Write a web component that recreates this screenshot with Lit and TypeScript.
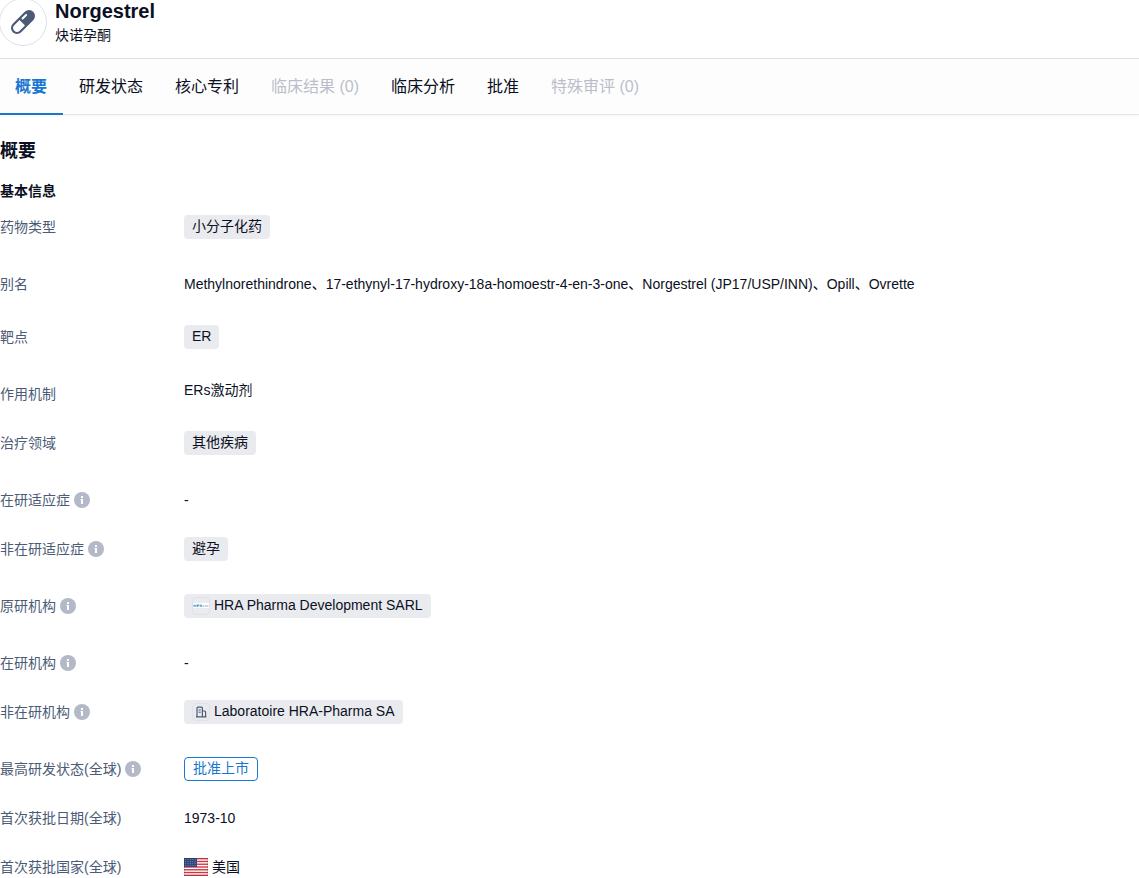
import { LitElement, html, svg, css, nothing, type TemplateResult } from "lit";
import { customElement, property, state } from "lit/decorators.js";
import { classMap } from "lit/directives/class-map.js";

type Kind = "chip" | "text" | "list" | "link" | "status" | "country";

interface Row {
  label: string;
  info?: boolean;
  kind: Kind;
  value: string;
  icon?: "hra" | "building";
}

const TABS = [
  { label: "概要" },
  { label: "研发状态" },
  { label: "核心专利" },
  { label: "临床结果 (0)", disabled: true },
  { label: "临床分析" },
  { label: "批准" },
  { label: "特殊审评 (0)", disabled: true },
];

const ROWS: Row[] = [
  { label: "药物类型", kind: "chip", value: "小分子化药" },
  {
    label: "别名",
    kind: "list",
    value:
      "Methylnorethindrone、17-ethynyl-17-hydroxy-18a-homoestr-4-en-3-one、Norgestrel (JP17/USP/INN)、Opill、Ovrette",
  },
  { label: "靶点", kind: "chip", value: "ER" },
  { label: "作用机制", kind: "link", value: "ERs激动剂" },
  { label: "治疗领域", kind: "chip", value: "其他疾病" },
  { label: "在研适应症", info: true, kind: "text", value: "-" },
  { label: "非在研适应症", info: true, kind: "chip", value: "避孕" },
  { label: "原研机构", info: true, kind: "chip", value: "HRA Pharma Development SARL", icon: "hra" },
  { label: "在研机构", info: true, kind: "text", value: "-" },
  { label: "非在研机构", info: true, kind: "chip", value: "Laboratoire HRA-Pharma SA", icon: "building" },
  { label: "最高研发状态(全球)", info: true, kind: "status", value: "批准上市" },
  { label: "首次获批日期(全球)", kind: "text", value: "1973-10" },
  { label: "首次获批国家(全球)", kind: "country", value: "美国" },
];

const pill = html`
  <svg width="30" height="30" viewBox="0 0 30 30" aria-hidden="true">
    <g transform="rotate(-45 15 15)">
      <rect x="0.5" y="9" width="29" height="12" rx="6" fill="#4b5b76" />
      <path d="M14 11.2H6.5a3.8 3.8 0 0 0 0 7.6H14z" fill="#fff" />
      <path d="M17.2 12.2h5" fill="none" stroke="#fff" stroke-width="2" stroke-linecap="round" />
    </g>
  </svg>
`;

const infoIcon = html`
  <svg width="16" height="16" viewBox="0 0 16 16" aria-hidden="true">
    <circle cx="8" cy="8" r="8" fill="#b3b9c6" />
    <rect x="7" y="4" width="2" height="2" fill="#fff" />
    <path d="M6.5 7H9v5H7V8h-.5z" fill="#fff" />
  </svg>
`;

const hraLogo = html`
  <svg width="16" height="16" viewBox="0 0 16 16" aria-hidden="true">
    <rect y="5" width="16" height="5" fill="#fff" />
    <path d="M1 6.5v2.5M3 6.5v2.5M1 7.8h2M4.5 9V6.8h1.5v1H5M7 9l1-2.4L9 9" fill="none" stroke="#4f9ac9" stroke-width="0.9" />
    <path d="M9.5 8h2M12 8h3.5" fill="none" stroke="#a9cde3" stroke-width="1.4" />
  </svg>
`;

const building = html`
  <svg width="16" height="16" viewBox="0 0 16 16" aria-hidden="true">
    <g fill="none" stroke="#4b5b76" stroke-width="1.2">
      <path d="M4 13V4.2a1 1 0 0 1 1-1h3.4a1 1 0 0 1 1 1V13" />
      <path d="M9.4 7h2.2a1 1 0 0 1 1 1v5M3 12.9h10.4" />
      <path d="M5.6 6h2.2M5.6 8.2h2.2" stroke-width="1" />
    </g>
  </svg>
`;

const flag = html`
  <svg width="24" height="18" viewBox="0 0 24 18" aria-hidden="true">
    <rect width="24" height="18" fill="#fff" />
    ${[0, 1, 2, 3, 4, 5, 6].map(
      (i) => svg`<rect y=${(i * 36) / 13} width="24" height=${18 / 13} fill="#d0383f" />`
    )}
    <rect width="13" height="9" fill="#33487f" />
    ${[0, 1, 2, 3].map((r) =>
      [0, 1, 2, 3, 4].map(
        (c) => svg`<rect x=${1.2 + c * 2.4} y=${1 + r * 2.1} width="0.8" height="0.8" fill="#8e9cc0" />`
      )
    )}
    <rect x="0.5" y="0.5" width="23" height="17" fill="none" stroke="#000" stroke-opacity="0.12" />
  </svg>
`;

@customElement("drug-field")
export class DrugField extends LitElement {
  @property({ attribute: false }) row!: Row;

  static styles = css`
    :host {
      display: grid;
      grid-template-columns: 184px minmax(0, 1fr);
      padding-bottom: 25px;
      font-size: 14px;
      line-height: 24px;
    }
    .label {
      display: flex;
      align-items: center;
      align-self: start;
      gap: 4px;
      color: #4b5b76;
    }
    .info {
      display: flex;
      padding: 0;
      border: 0;
      background: none;
      cursor: help;
    }
    .value {
      margin: 0;
      color: #0b1023;
    }
    .value.chip {
      padding-bottom: 8px;
    }
    .value.list {
      padding-bottom: 4px;
    }
    .value.link {
      line-height: 16px;
    }
    .value.country {
      display: flex;
      align-items: center;
      gap: 4px;
    }
    a {
      color: inherit;
      text-decoration: none;
    }
    .tag,
    .state {
      display: flex;
      align-items: center;
      gap: 4px;
      box-sizing: border-box;
      width: fit-content;
      height: 24px;
      padding: 0 8px 2px;
      border-radius: 4px;
      background: #eaebef;
    }
    .state {
      border: 1px solid #1976d2;
      background: #fff;
      color: #1976d2;
    }
    .logo {
      display: flex;
      box-sizing: border-box;
      width: 18px;
      height: 18px;
      margin-top: 2px;
      border: 1px solid #e0e2e9;
      border-radius: 4px;
      overflow: hidden;
    }
  `;

  private content(): TemplateResult | string {
    const { kind, value, icon } = this.row;
    switch (kind) {
      case "chip":
        return html`<a class="tag" href="#">
          ${icon ? html`<span class="logo">${icon === "hra" ? hraLogo : building}</span>` : nothing}${value}
        </a>`;
      case "link":
        return html`<a href="#">${value}</a>`;
      case "status":
        return html`<span class="state">${value}</span>`;
      case "country":
        return html`${flag}<span>${value}</span>`;
      default:
        return value;
    }
  }

  render() {
    const { label, info, kind } = this.row;
    return html`
      <div class="label">
        <span>${label}</span>
        ${info ? html`<button class="info" type="button" aria-label=${label}>${infoIcon}</button>` : nothing}
      </div>
      <div class="value ${kind}">${this.content()}</div>
    `;
  }
}

@customElement("app-root")
export class AppRoot extends LitElement {
  @state() private active = 0;

  static styles = css`
    :host {
      display: block;
      overflow: hidden;
      background: #fff;
      color: #0b1023;
      font-family: "Liberation Sans", "Noto Sans CJK SC", sans-serif;
    }
    .head {
      display: flex;
      align-items: flex-start;
      gap: 8px;
      height: 58px;
      overflow: hidden;
      border-bottom: 1px solid #dcdee4;
    }
    .avatar {
      display: flex;
      flex: none;
      align-items: center;
      justify-content: center;
      box-sizing: border-box;
      width: 48px;
      height: 48px;
      margin: -2px 0 0 -1px;
      border: 1px solid #dfe1e8;
      border-radius: 50%;
    }
    .name {
      margin: 0;
      font-size: 20px;
      line-height: 22px;
    }
    .alias {
      margin: 0;
      font-size: 14px;
      line-height: 26px;
    }
    .tabs {
      display: flex;
      height: 55px;
      border-bottom: 1px solid #e6e7eb;
      box-shadow: 0 1px 2px rgba(0, 0, 0, 0.04);
      background: #fdfdfd;
    }
    .tab {
      margin-bottom: -1px;
      padding: 2px 16px 0;
      border: 0;
      border-bottom: 2px solid transparent;
      background: none;
      color: #0b1023;
      font: inherit;
      font-size: 16px;
      line-height: 24px;
      white-space: nowrap;
      cursor: pointer;
    }
    .tab:first-child {
      padding-left: 15px;
    }
    .tab.active {
      border-bottom-color: #1976d2;
      color: #1976d2;
      font-weight: 700;
    }
    .tab:disabled {
      color: #b9bfca;
      cursor: default;
    }
    .section {
      margin: 0;
      padding: 22px 0 14px;
      font-size: 18px;
      line-height: 28px;
    }
    .group {
      margin: 0;
      padding-bottom: 12px;
      font-size: 14px;
      line-height: 24px;
    }
  `;

  render() {
    return html`
      <header class="head">
        <div class="avatar">${pill}</div>
        <div>
          <h1 class="name">Norgestrel</h1>
          <p class="alias">炔诺孕酮</p>
        </div>
      </header>
      <nav class="tabs">
        ${TABS.map(
          (t, i) => html`<button
            type="button"
            class=${classMap({ tab: true, active: i === this.active })}
            ?disabled=${t.disabled ?? false}
            @click=${() => (this.active = i)}
          >
            ${t.label}
          </button>`
        )}
      </nav>
      <main>
        <h2 class="section">概要</h2>
        <h3 class="group">基本信息</h3>
        ${ROWS.map((row) => html`<drug-field .row=${row}></drug-field>`)}
      </main>
    `;
  }
}
